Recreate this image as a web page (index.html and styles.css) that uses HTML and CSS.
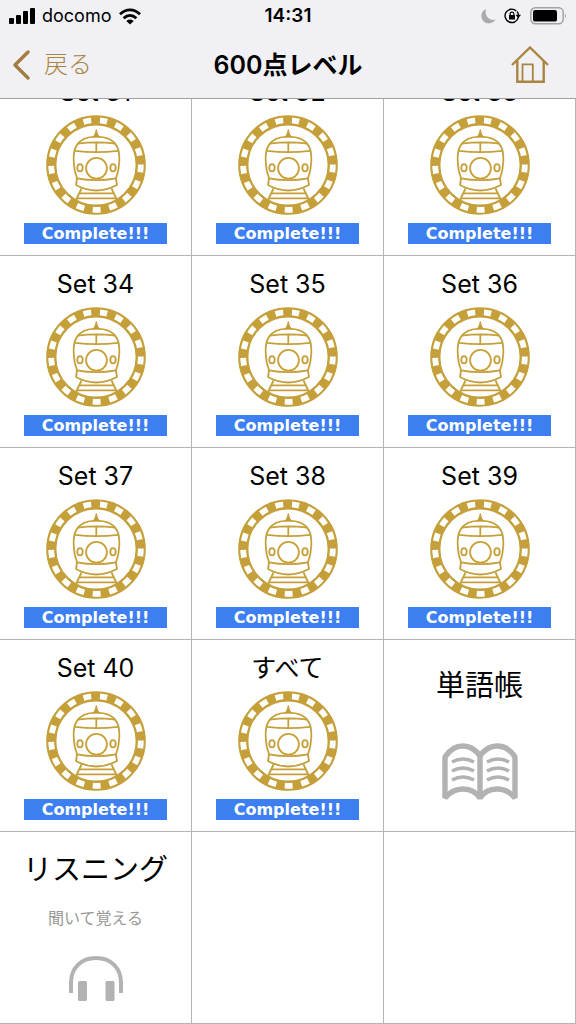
FILE: index.html
```html
<!DOCTYPE html>
<html lang="ja">
<head>
<meta charset="utf-8">
<meta name="viewport" content="width=device-width, initial-scale=1">
<title>600点レベル</title>
<link rel="stylesheet" href="styles.css">
</head>
<body>
<svg class="defs" aria-hidden="true">
  <symbol id="train" viewBox="0 0 100 100">
    <g fill="none" stroke="#c5a03a" stroke-width="1.8" stroke-linejoin="round">
      <circle cx="50" cy="50" r="44.7" stroke-width="10.2"/>
      <circle cx="50" cy="50" r="44.8" stroke="#fff" stroke-width="5.8" stroke-dasharray="7.8 8.758" stroke-dashoffset="3.9" transform="rotate(-80.6 50 50)"/>
      <path d="M47.300 22Q49.500 19 50.300 14.500 51.100 19 53.300 22Z" fill="#c5a03a" stroke-width="1"/>
      <path d="M31 63.300C27 53 26.500 38 30 31.500 34 24 42 21.700 50.300 21.700S67 24 71 31.500C74.500 38 74 53 70 63.300"/>
      <path d="M32 28.700Q50.300 26 69 28.700M29 35.800Q50.300 38.500 72 35.800M50.300 27.300V37"/>
      <circle cx="50.500" cy="53.300" r="10.400"/>
      <ellipse cx="34" cy="52.700" rx="2.700" ry="3.600"/>
      <ellipse cx="67" cy="52.700" rx="2.700" ry="3.600"/>
      <path d="M31 63.300Q50 67 70 63.300L71 70Q50 81 30 70ZM35.500 73.500 29.500 86M65.500 73.500 71.500 86M33.500 78.400H68M31 83.400H70"/>
    </g>
  </symbol>
</svg>

<header class="header">
  <div class="status">
    <div class="status-left">
      <svg class="signal" viewBox="0 0 26 16"><rect y="10" width="5" height="6" rx="1"/><rect x="7" y="7" width="5" height="9" rx="1"/><rect x="14" y="3" width="5" height="13" rx="1"/><rect x="21" width="5" height="16" rx="1"/></svg>
      <span class="carrier">docomo</span>
      <svg class="wifi" viewBox="0 0 24 17"><path d="M2 6.300C8 .5 16 .5 22 6.300M5.600 10.200C9.500 6.600 14.500 6.600 18.400 10.200" fill="none" stroke="#000" stroke-width="2.800"/><path d="M12 16.500 8.300 12.900Q12 10.300 15.700 12.900Z"/></svg>
    </div>
    <time class="clock">14:31</time>
    <div class="status-right">
      <svg class="moon" viewBox="0 0 15 15"><path d="M5 0A7.500 7.500 0 1 0 14.500 10.500C9 12.500 3 7 5 0Z" fill="#aaaaad"/></svg>
      <svg class="lock" viewBox="0 0 18 16"><path d="M14.300 9.300A6.700 6.700 0 1 1 12.300 2.900M13 3.500Q14.500 5 14.500 7.500" fill="none" stroke="#000" stroke-width="1.400"/><path d="M11.600 6.800H17L14.300 10.300Z"/><rect x="5" y="7" width="6" height="4.500" rx=".6"/><path d="M6.100 7.500V6a1.900 1.900 0 0 1 3.800 0v1.500" fill="none" stroke="#000" stroke-width="1.200"/></svg>
      <svg class="battery" viewBox="0 0 37 18"><rect x=".8" y=".8" width="32.400" height="16" rx="4.500" fill="none" stroke="#a2a2a6" stroke-width="1.500"/><rect x="3" y="3" width="24" height="11.600" rx="2.200"/><path d="M35 6.500q2 2.500 0 5Z" fill="#a2a2a6"/></svg>
    </div>
  </div>
  <nav class="nav">
    <a class="back" href="#"><svg class="chevron" viewBox="0 0 18 30"><path d="M16 2 3 15 16 28" fill="none" stroke="#a17d3f" stroke-width="3.400" stroke-linecap="round" stroke-linejoin="round"/></svg>戻る</a>
    <h1 class="title">600点レベル</h1>
    <a class="home" href="#" aria-label="ホーム"><svg class="house" viewBox="0 0 38 38"><g fill="none" stroke="#a9853f"><path d="M1 19 19 1.500 37 19" stroke-width="2.400"/><path d="M6.300 15V35.700H32.700V15" stroke-width="2.400"/><path d="M11.500 35V18.300H21.800V35" stroke-width="1.800"/></g></svg></a>
  </nav>
</header>

<main class="grid">
  <a class="tile" href="#"><span class="name">Set 31</span><svg class="emblem"><use href="#train"/></svg><span class="badge">Complete!!!</span></a>
  <a class="tile" href="#"><span class="name">Set 32</span><svg class="emblem"><use href="#train"/></svg><span class="badge">Complete!!!</span></a>
  <a class="tile" href="#"><span class="name">Set 33</span><svg class="emblem"><use href="#train"/></svg><span class="badge">Complete!!!</span></a>
  <a class="tile" href="#"><span class="name">Set 34</span><svg class="emblem"><use href="#train"/></svg><span class="badge">Complete!!!</span></a>
  <a class="tile" href="#"><span class="name">Set 35</span><svg class="emblem"><use href="#train"/></svg><span class="badge">Complete!!!</span></a>
  <a class="tile" href="#"><span class="name">Set 36</span><svg class="emblem"><use href="#train"/></svg><span class="badge">Complete!!!</span></a>
  <a class="tile" href="#"><span class="name">Set 37</span><svg class="emblem"><use href="#train"/></svg><span class="badge">Complete!!!</span></a>
  <a class="tile" href="#"><span class="name">Set 38</span><svg class="emblem"><use href="#train"/></svg><span class="badge">Complete!!!</span></a>
  <a class="tile" href="#"><span class="name">Set 39</span><svg class="emblem"><use href="#train"/></svg><span class="badge">Complete!!!</span></a>
  <a class="tile" href="#"><span class="name">Set 40</span><svg class="emblem"><use href="#train"/></svg><span class="badge">Complete!!!</span></a>
  <a class="tile" href="#"><span class="name">すべて</span><svg class="emblem"><use href="#train"/></svg><span class="badge">Complete!!!</span></a>
  <a class="tile tile-book" href="#"><span class="feature">単語帳</span><svg class="book" viewBox="0 0 76 60"><g fill="none" stroke="#b2b2b2"><path d="M3 55V14Q10 3 21 3 31 3 38 13 45 3 55 3 66 3 73 14V55Q66 46 55 46 44 46 38 55 32 46 21 46 10 46 3 55ZM38 13V55" stroke-width="5.400" stroke-linejoin="bevel"/><path d="M10 19Q21 13 32 19M10 28Q21 22 32 28M10 37Q21 31 32 37M45 19Q56 13 67 19M45 28Q56 22 67 28M45 37Q56 31 67 37" stroke-width="3.600"/></g></svg></a>
  <a class="tile tile-listening" href="#"><span class="feature">リスニング</span><span class="note">聞いて覚える</span><svg class="headphones" viewBox="0 0 54 46"><path d="M2 37V27C2 12 12 2 27 2S52 12 52 27V37" fill="none" stroke="#b2b2b2" stroke-width="4"/><rect x="9" y="25" width="9" height="20" rx="1.500" fill="#b2b2b2"/><rect x="36.500" y="25" width="9" height="20" rx="1.500" fill="#b2b2b2"/></svg></a>
  <div class="tile"></div>
  <div class="tile"></div>
</main>
</body>
</html>
```
FILE: styles.css
```css
* {
  box-sizing: border-box;
}

body {
  margin: 0;
  background: #fff;
  color: #000;
  font-family: Inter, "Noto Sans CJK JP", sans-serif;
}

a {
  color: inherit;
  text-decoration: none;
}

svg {
  display: block;
  flex: none;
}

.defs {
  position: absolute;
  width: 0;
  height: 0;
}

.header {
  position: sticky;
  top: 0;
  z-index: 1;
  background: #f1f0f5;
  border-bottom: 1px solid #a0a0a3;
}

.status,
.nav {
  display: grid;
  grid-template-columns: 1fr auto 1fr;
  align-items: center;
}

.status {
  height: 32px;
  padding: 0 9px;
}

.status-left,
.status-right {
  display: flex;
  align-items: center;
}

.status-left {
  gap: 7px;
}

.status-right {
  justify-content: flex-end;
  gap: 8px;
}

.carrier {
  font-size: 18px;
  line-height: 24px;
}

.clock {
  font-size: 19px;
  font-weight: 600;
  line-height: 24px;
}

.signal {
  width: 26px;
  height: 16px;
}

.wifi {
  width: 24px;
  height: 17px;
}

.moon {
  width: 15px;
  height: 15px;
}

.lock {
  width: 18px;
  height: 16px;
}

.battery {
  width: 37px;
  height: 18px;
}

.nav {
  height: 66px;
  padding: 0 12px;
}

.back {
  display: flex;
  align-items: center;
  gap: 14px;
  color: #a9853f;
  font-size: 24px;
  font-weight: 300;
  line-height: 32px;
}

.chevron {
  width: 18px;
  height: 30px;
}

.title {
  margin: 0;
  font-size: 25px;
  font-weight: 600;
  line-height: 32px;
}

.home {
  justify-self: end;
  padding-right: 15px;
}

.house {
  width: 38px;
  height: 38px;
}

.grid {
  display: grid;
  grid-template-columns: repeat(3, 1fr);
  grid-auto-rows: minmax(192px, auto);
  margin-top: -35px;
}

.tile {
  display: flex;
  flex-direction: column;
  align-items: center;
  padding: 12px 24px 11px;
  border-right: 1px solid #b4b4b4;
  border-bottom: 1px solid #b4b4b4;
}

.name {
  margin-bottom: 7px;
  font-size: 25px;
  line-height: 32px;
}

.emblem {
  width: 100px;
  height: 100px;
}

.badge {
  align-self: stretch;
  margin-top: 8px;
  background: #3d7ff0;
  color: #fff;
  font-family: "DejaVu Sans", sans-serif;
  font-size: 16px;
  font-weight: 700;
  line-height: 21px;
  text-align: center;
}

.feature {
  font-size: 29px;
  line-height: 40px;
  white-space: nowrap;
}

.tile-book {
  padding-top: 26px;
}

.book {
  width: 76px;
  height: 60px;
  margin-top: 37px;
}

.tile-listening {
  padding: 18px 16px 11px;
}

.note {
  margin-top: 16px;
  color: #999;
  font-size: 16px;
  line-height: 24px;
}

.headphones {
  width: 54px;
  height: 46px;
  margin-top: 26px;
}
```
